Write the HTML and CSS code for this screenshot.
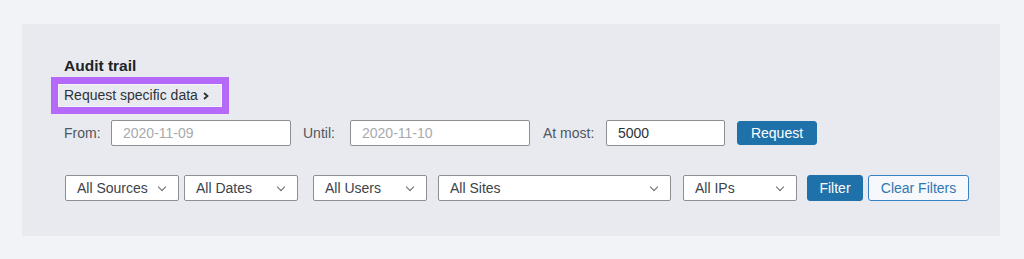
FILE: index.html
```html
<!DOCTYPE html>
<html lang="en">
<head>
    <meta charset="UTF-8">
    <meta name="viewport" content="width=device-width, initial-scale=1.0">
    <title>Audit trail</title>
    <link rel="stylesheet" href="styles.css">
</head>
<body>
    <div class="panel">
        <h2 class="panel-title">Audit trail</h2>
        <div class="highlight">
            <a href="#" class="toggle">Request specific data
                <svg class="toggle-arrow" width="6" height="8" viewBox="0 0 6 8"><path d="M1 1l3.5 3L1 7" fill="none" stroke="#2c3338" stroke-width="1.8"/></svg>
            </a>
        </div>

        <div class="request-row">
            <label class="lbl lbl-from" for="from">From:</label>
            <input id="from" class="field field-date" type="text" placeholder="2020-11-09">
            <label class="lbl lbl-until" for="until">Until:</label>
            <input id="until" class="field field-date" type="text" placeholder="2020-11-10">
            <label class="lbl lbl-most" for="most">At most:</label>
            <input id="most" class="field field-num" type="text" value="5000">
            <button class="btn btn-primary btn-request">Request</button>
        </div>

        <div class="filter-row">
            <span class="select sel-sources"><select><option>All Sources</option></select></span>
            <span class="select sel-dates"><select><option>All Dates</option></select></span>
            <span class="select sel-users"><select><option>All Users</option></select></span>
            <span class="select sel-sites"><select><option>All Sites</option></select></span>
            <span class="select sel-ips"><select><option>All IPs</option></select></span>
            <button class="btn btn-primary btn-filter">Filter</button>
            <button class="btn btn-secondary btn-clear">Clear Filters</button>
        </div>
    </div>
</body>
</html>
```

FILE: styles.css
```css
body {
    font-family: "Liberation Sans", Arial, sans-serif;
    background-color: #f2f3f7;
    margin: 0;
    padding: 0;
    color: #50575e;
}

.panel {
    width: 978px;
    box-sizing: border-box;
    margin: 24px 24px 0 22px;
    padding: 33px 42px 35px;
    background-color: #e9eaef;
}

.panel-title {
    margin: 0;
    font-size: 15.5px;
    line-height: 18px;
    font-weight: bold;
    color: #1d2327;
}

.highlight {
    display: inline-block;
    margin: 2px 0 0 -13px;
    border: 7px solid #b569f8;
}

.toggle {
    display: flex;
    align-items: center;
    gap: 5px;
    padding: 0 8px 0 5px;
    width: 164px;
    box-sizing: border-box;
    border: 1px solid #f4f5f8;
    font-size: 14px;
    line-height: 21px;
    color: #2c3338;
    text-decoration: none;
}

.toggle-arrow {
    margin-top: 1px;
}

.request-row {
    display: flex;
    align-items: center;
    margin-top: 6px;
}

.filter-row {
    display: flex;
    align-items: center;
    margin-top: 29px;
    margin-left: 1px;
}

.request-row > *,
.filter-row > * {
    flex-shrink: 0;
}

.lbl {
    font-size: 14px;
    color: #50575e;
}

.lbl-from {
    width: 47px;
}

.lbl-until {
    width: 47px;
}

.lbl-most {
    width: 63px;
    margin-left: 1px;
}

.field {
    height: 26px;
    box-sizing: border-box;
    border: 1px solid #8c8f94;
    border-radius: 2px;
    background: #fff;
    padding: 0 11px;
    font-family: inherit;
    font-size: 14px;
    color: #2c3338;
    margin-right: 12px;
}

.field::placeholder {
    color: #a7aaad;
}

.field-date {
    width: 180px;
}

.field-num {
    width: 119px;
}

.btn {
    font-family: inherit;
    font-size: 14px;
    border-radius: 3px;
    box-sizing: border-box;
    padding: 0;
    cursor: pointer;
}

.btn-primary {
    background-color: #1f71aa;
    border: 1px solid #1f71aa;
    color: #fff;
}

.btn-secondary {
    background-color: #f6f8fb;
    border: 1px solid #3582c4;
    color: #2f78b4;
}

.btn-request {
    width: 80px;
    height: 24px;
}

.btn-filter {
    width: 56px;
    height: 26px;
    margin-left: 10px;
}

.btn-clear {
    width: 101px;
    height: 26px;
    margin-left: 5px;
}

.select {
    position: relative;
    display: inline-block;
}

.select::after {
    content: "";
    position: absolute;
    right: 14px;
    top: 9px;
    width: 5px;
    height: 5px;
    border-right: 1.6px solid #646970;
    border-bottom: 1.6px solid #646970;
    transform: rotate(45deg);
    pointer-events: none;
}

.select select {
    appearance: none;
    -webkit-appearance: none;
    width: 100%;
    height: 26px;
    box-sizing: border-box;
    border: 1px solid #8c8f94;
    border-radius: 2px;
    background: #fff;
    padding: 0 24px 0 11px;
    font-family: inherit;
    font-size: 14px;
    color: #3c434a;
    display: block;
}

.sel-sources {
    width: 114px;
}

.sel-dates {
    width: 114px;
    margin-left: 5px;
}

.sel-users {
    width: 114px;
    margin-left: 15px;
}

.sel-sites {
    width: 233px;
    margin-left: 11px;
}

.sel-ips {
    width: 114px;
    margin-left: 12px;
}
```
